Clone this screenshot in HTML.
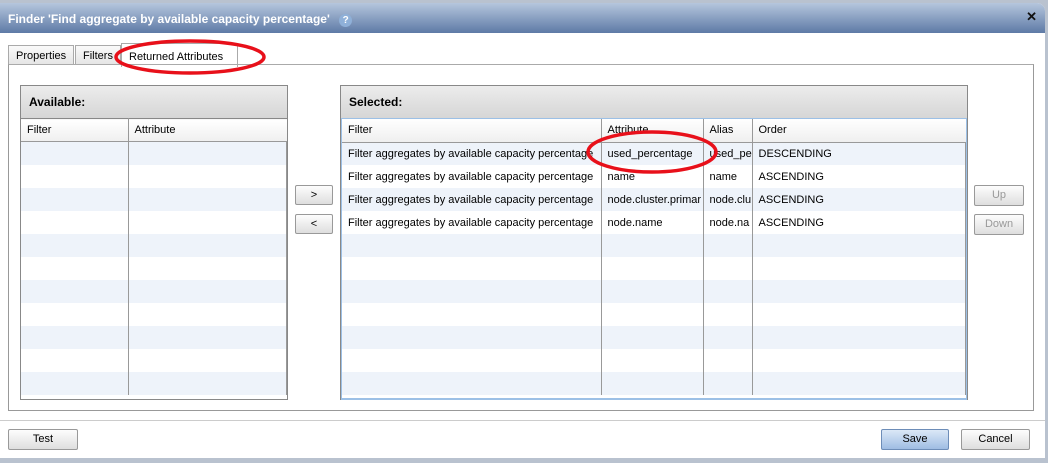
<!DOCTYPE html>
<html><head><style>
body{margin:0;width:1048px;height:463px;background:#b9c2cf;position:relative;overflow:hidden;font-family:"Liberation Sans",Tahoma,sans-serif;font-size:11px;color:#000}
.a{position:absolute;box-sizing:border-box}
.dlg{left:0;top:3px;width:1045px;height:455px;background:#fff;border-radius:0 8px 0 0;overflow:hidden}
.title{left:0;top:0;width:1045px;height:30px;background:linear-gradient(#b5c6dd,#5e7aa6);color:#fff;font-weight:bold;font-size:12px;padding:9px 0 0 8px}
.tab{top:42px;height:20px;border:1px solid #aaa;border-bottom:none;background:linear-gradient(#fafafa,#e4e4e4);padding:4px 7px 0}
.panel{border:1px solid #888;overflow:hidden}
.hdr{box-sizing:border-box;background:linear-gradient(#ececec,#d6d6d6);font-weight:bold;padding:9px 8px 0;height:32px;font-size:12px}
.btn{border:1px solid #999;border-radius:2px;background:linear-gradient(#fdfdfd,#dedede);text-align:center;font-size:11px}
table{border-collapse:collapse;table-layout:fixed}
td{height:23px;line-height:22px;padding:0 6px;white-space:nowrap;overflow:hidden;border-right:1px solid #999;box-sizing:border-box}
tr:nth-child(even) td{background:#eef3fa}
tr.h td{background:linear-gradient(#fff,#efefef);border-bottom:1px solid #999;height:23px}
</style></head><body>
<div class="a dlg">
 <div class="a title">Finder 'Find aggregate by available capacity percentage' <span style="display:inline-block;width:13px;height:13px;border-radius:7px;background:#8fb0d8;color:#fff;font-size:10px;text-align:center;line-height:13px;margin-left:6px">?</span></div>
 <div class="a" style="right:8px;top:6px;color:#111;font-weight:bold;font-size:13px">✕</div>
 <div class="a tab" style="left:8px;width:66px">Properties</div>
 <div class="a tab" style="left:75px;width:46px">Filters</div>
 <div class="a tab" style="left:121px;width:117px;top:40px;height:24px;background:#fff;padding-top:7px">Returned Attributes</div>
 <div class="a" style="left:8px;top:61px;width:1026px;height:347px;border:1px solid #999;border-top-color:#aaa"></div>
 <div class="a" style="left:238px;top:61px;width:795px;height:1px;background:#aaa"></div>
 <!-- available -->
 <div class="a panel" style="left:20px;top:82px;width:268px;height:315px">
  <div class="hdr">Available:</div>
  <table style="width:266px;border-top:1px solid #888"><colgroup><col style="width:107px"><col></colgroup>
  <tr class="h"><td>Filter</td><td style="border-right:none">Attribute</td></tr>
  <tr><td></td><td></td></tr><tr><td></td><td></td></tr><tr><td></td><td></td></tr><tr><td></td><td></td></tr><tr><td></td><td></td></tr><tr><td></td><td></td></tr><tr><td></td><td></td></tr><tr><td></td><td></td></tr><tr><td></td><td></td></tr><tr><td></td><td></td></tr><tr><td></td><td></td></tr>
  </table>
 </div>
 <div class="a btn" style="left:295px;top:182px;width:38px;height:20px;line-height:18px">&gt;</div>
 <div class="a btn" style="left:295px;top:211px;width:38px;height:20px;line-height:18px">&lt;</div>
 <!-- selected -->
 <div class="a panel" style="left:340px;top:82px;width:628px;height:315px;border-bottom:none">
  <div class="hdr">Selected:</div>
  <div style="border:2px solid #9cc0e6;border-top:1px solid #9cc0e6;height:282px;overflow:hidden;margin:0 -1px;box-sizing:border-box">
  <table style="width:624px"><colgroup><col style="width:259px"><col style="width:102px"><col style="width:49px"><col></colgroup>
  <tr class="h"><td>Filter</td><td>Attribute</td><td>Alias</td><td style="border-right:none">Order</td></tr>
  <tr><td>Filter aggregates by available capacity percentage</td><td>used_percentage</td><td>used_pe</td><td>DESCENDING</td></tr>
  <tr><td>Filter aggregates by available capacity percentage</td><td>name</td><td>name</td><td>ASCENDING</td></tr>
  <tr><td>Filter aggregates by available capacity percentage</td><td>node.cluster.primar</td><td>node.clu</td><td>ASCENDING</td></tr>
  <tr><td>Filter aggregates by available capacity percentage</td><td>node.name</td><td>node.na</td><td>ASCENDING</td></tr>
  <tr><td></td><td></td><td></td><td></td></tr><tr><td></td><td></td><td></td><td></td></tr><tr><td></td><td></td><td></td><td></td></tr><tr><td></td><td></td><td></td><td></td></tr><tr><td></td><td></td><td></td><td></td></tr><tr><td></td><td></td><td></td><td></td></tr><tr><td></td><td></td><td></td><td></td></tr>
  </table></div>
 </div>
 <div class="a btn" style="left:974px;top:182px;width:50px;height:21px;line-height:19px;color:#999">Up</div>
 <div class="a btn" style="left:974px;top:211px;width:50px;height:21px;line-height:19px;color:#999">Down</div>
 <div class="a" style="left:0;top:417px;width:1045px;height:1px;background:#ccc"></div>
 <div class="a btn" style="left:8px;top:426px;width:70px;height:21px;line-height:19px">Test</div>
 <div class="a btn" style="left:881px;top:426px;width:68px;height:21px;line-height:19px;background:linear-gradient(#dbe8f7,#9fbde3);border-color:#6d8db8">Save</div>
 <div class="a btn" style="left:961px;top:426px;width:69px;height:21px;line-height:19px">Cancel</div>
</div>
<svg class="a" style="left:0;top:0" width="1048" height="463">
 <ellipse cx="190" cy="57" rx="74" ry="16" fill="none" stroke="#e8101a" stroke-width="3.5"/>
 <ellipse cx="652" cy="152" rx="64" ry="20" fill="none" stroke="#e8101a" stroke-width="3.5"/>
</svg>
</body></html>
